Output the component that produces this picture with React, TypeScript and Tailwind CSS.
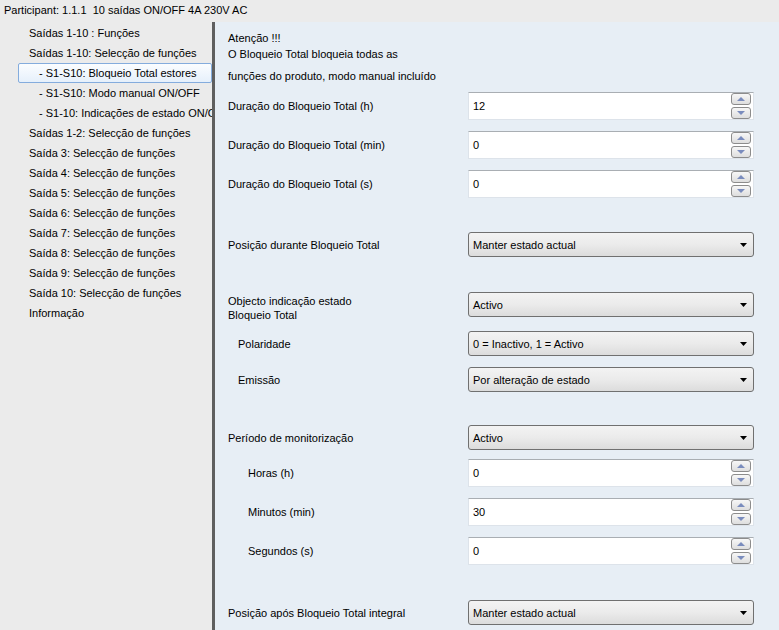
import React from 'react';

const treeItems = [
  { label: 'Saídas 1-10 : Funções', level: 0 },
  { label: 'Saídas 1-10: Selecção de funções', level: 0 },
  { label: '- S1-S10: Bloqueio Total estores', level: 1, selected: true },
  { label: '- S1-S10: Modo manual ON/OFF', level: 1 },
  { label: '- S1-10: Indicações de estado ON/OFF', level: 1 },
  { label: 'Saídas 1-2: Selecção de funções', level: 0 },
  { label: 'Saída 3: Selecção de funções', level: 0 },
  { label: 'Saída 4: Selecção de funções', level: 0 },
  { label: 'Saída 5: Selecção de funções', level: 0 },
  { label: 'Saída 6: Selecção de funções', level: 0 },
  { label: 'Saída 7: Selecção de funções', level: 0 },
  { label: 'Saída 8: Selecção de funções', level: 0 },
  { label: 'Saída 9: Selecção de funções', level: 0 },
  { label: 'Saída 10: Selecção de funções', level: 0 },
  { label: 'Informação', level: 0 },
];

const SpinButton = ({ up }: { up?: boolean }) => (
  <div className="flex h-[12px] w-[20px] items-center justify-center rounded-[3px] border border-[#8c8c8c] bg-gradient-to-b from-[#f7f7f7] to-[#dedede]">
    <svg width="8" height="4" viewBox="0 0 8 4">
      {up ? <path d="M0 4 L4 0 L8 4 Z" fill="#7a8cbd" /> : <path d="M0 0 L8 0 L4 4 Z" fill="#7a8cbd" />}
    </svg>
  </div>
);

const NumberBox = ({ value }: { value: string }) => (
  <div className="flex h-[28px] w-[286px] items-center border border-[#dde3ea] border-t-[#a9aeb3] bg-white pl-[4px] pr-[2px]">
    <span className="flex-1">{value}</span>
    <div className="flex flex-col gap-[2px]">
      <SpinButton up />
      <SpinButton />
    </div>
  </div>
);

const Dropdown = ({ value }: { value: string }) => (
  <div className="flex h-[25px] w-[286px] items-center rounded-[3px] border border-[#707070] bg-gradient-to-b from-[#f3f3f3] via-[#ebebeb] to-[#dcdcdc] pl-[4px] pr-[6px]">
    <span className="flex-1">{value}</span>
    <svg width="7" height="4" viewBox="0 0 7 4">
      <path d="M0 0 L7 0 L3.5 4 Z" fill="#000" />
    </svg>
  </div>
);

const Row = ({
  label,
  indent = 0,
  mt,
  children,
}: {
  label: React.ReactNode;
  indent?: number;
  mt: string;
  children: React.ReactNode;
}) => (
  <div className={`flex items-center ${mt}`}>
    <div className={`w-[253px] ${indent === 1 ? 'pl-[23px]' : indent === 2 ? 'pl-[33px]' : 'pl-[13px]'}`}>{label}</div>
    {children}
  </div>
);

export default function App() {
  return (
    <div
      className="flex h-[630px] w-[779px] flex-col overflow-hidden bg-[#ebebeb] text-[11px] leading-[16px] text-black"
      style={{ fontFamily: 'Tahoma, "Liberation Sans", Arial, sans-serif' }}
    >
      <div className="flex h-[22px] items-center pl-[4px] pb-[2px]">Participant: 1.1.1&nbsp; 10 saídas ON/OFF 4A 230V AC</div>

      <div className="flex min-h-0 flex-1">
        {/* tree */}
        <div className="w-[212px] overflow-hidden pt-[1px]">
          {treeItems.map((item) => (
            <div key={item.label} className="flex h-[20px] items-center">
              {item.selected ? (
                <div className="ml-[18px] flex h-[20px] flex-1 items-center whitespace-nowrap rounded-[2px] border border-[#84acdd] bg-gradient-to-b from-[#fbfdff] to-[#e6f0fb] pl-[20px]">
                  {item.label}
                </div>
              ) : (
                <div className={`whitespace-nowrap ${item.level === 1 ? 'pl-[39px]' : 'pl-[29px]'}`}>{item.label}</div>
              )}
            </div>
          ))}
        </div>

        <div className="w-[3px] bg-[#5f5f5f]" />

        {/* parameters */}
        <div className="flex-1 bg-[#e7eef5]">
          <div className="pl-[13px] pt-[8px]">
            <div>Atenção !!!</div>
            <div>O Bloqueio Total bloqueia todas as</div>
            <div className="mt-[6px]">funções do produto, modo manual incluído</div>
          </div>

          <Row label="Duração do Bloqueio Total (h)" mt="mt-[8px]">
            <NumberBox value="12" />
          </Row>
          <Row label="Duração do Bloqueio Total (min)" mt="mt-[11px]">
            <NumberBox value="0" />
          </Row>
          <Row label="Duração do Bloqueio Total (s)" mt="mt-[11px]">
            <NumberBox value="0" />
          </Row>

          <Row label="Posição durante Bloqueio Total" mt="mt-[34px]">
            <Dropdown value="Manter estado actual" />
          </Row>

          <Row
            label={
              <div className="h-[25px] pt-[2px] leading-[14px]">
                Objecto indicação estado
                <br />
                Bloqueio Total
              </div>
            }
            mt="mt-[35px]"
          >
            <Dropdown value="Activo" />
          </Row>
          <Row label="Polaridade" indent={1} mt="mt-[14px]">
            <Dropdown value="0 = Inactivo, 1 = Activo" />
          </Row>
          <Row label="Emissão" indent={1} mt="mt-[11px]">
            <Dropdown value="Por alteração de estado" />
          </Row>

          <Row label="Período de monitorização" mt="mt-[33px]">
            <Dropdown value="Activo" />
          </Row>
          <Row label="Horas (h)" indent={2} mt="mt-[9px]">
            <NumberBox value="0" />
          </Row>
          <Row label="Minutos (min)" indent={2} mt="mt-[11px]">
            <NumberBox value="30" />
          </Row>
          <Row label="Segundos (s)" indent={2} mt="mt-[11px]">
            <NumberBox value="0" />
          </Row>

          <Row label="Posição após Bloqueio Total integral" mt="mt-[35px]">
            <Dropdown value="Manter estado actual" />
          </Row>
        </div>
      </div>
    </div>
  );
}
